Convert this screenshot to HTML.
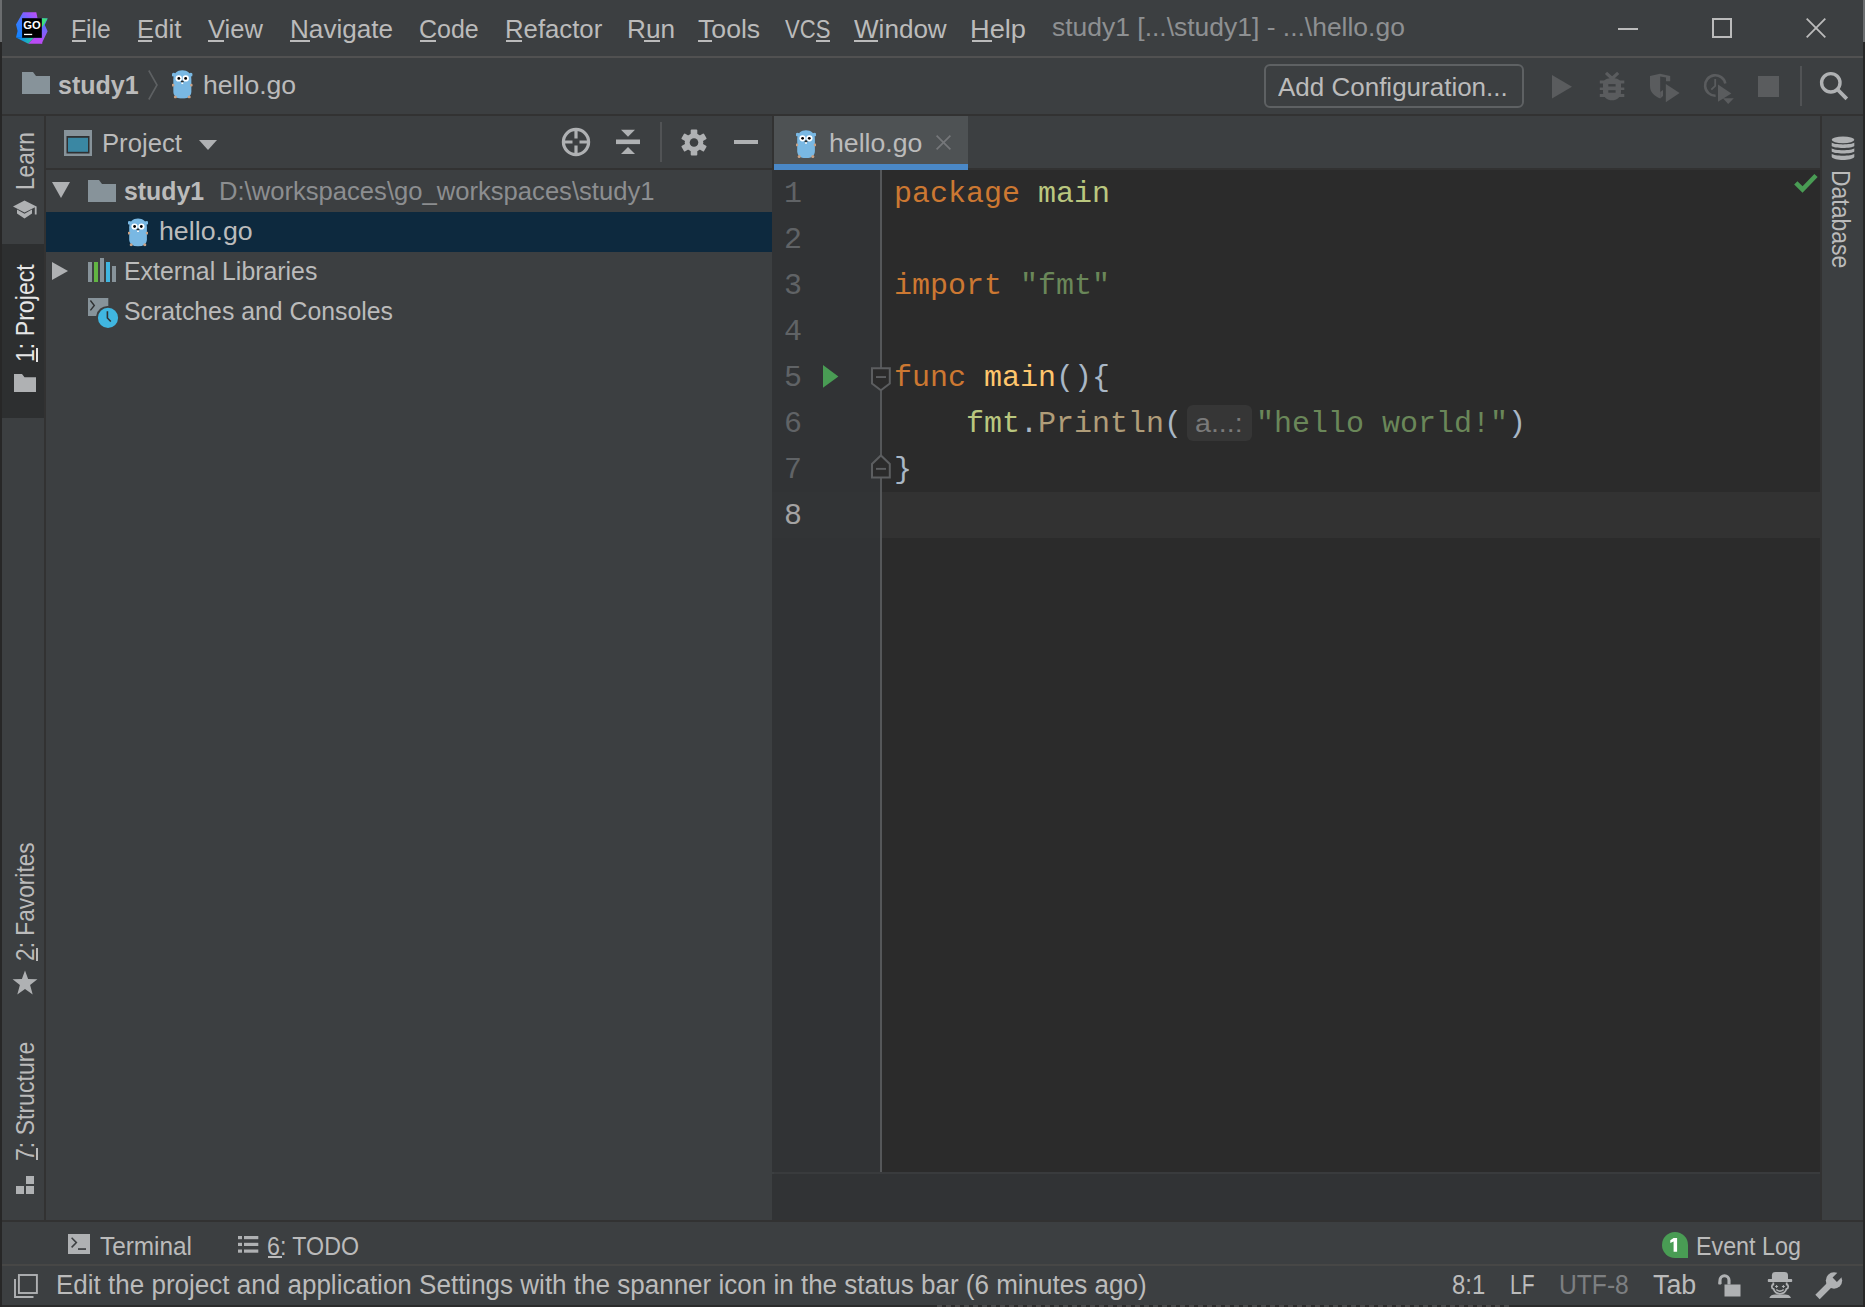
<!DOCTYPE html>
<html><head><meta charset="utf-8">
<style>
html,body{margin:0;padding:0;}
body{width:1865px;height:1307px;overflow:hidden;background:#3c3f41;position:relative;font-family:"Liberation Sans",sans-serif;}
.a{position:absolute;}
.t{position:absolute;white-space:pre;font-family:"Liberation Sans",sans-serif;color:#bbbbbb;transform-origin:0 0;}
.m{position:absolute;white-space:pre;font-family:"Liberation Mono",monospace;font-size:30px;line-height:30px;color:#a9b7c6;}
.ln{position:absolute;white-space:pre;font-family:"Liberation Mono",monospace;font-size:30px;line-height:30px;color:#606366;left:784px;}
.ul{position:absolute;height:2px;background:#bbbbbb;}
.kw{color:#cc7832}.pk{color:#bac77f}.fn{color:#ffc66d}.cl{color:#b09d79}.st{color:#6a8759}
svg{position:absolute;overflow:visible;}
</style></head><body>
<svg width="0" height="0" style="position:absolute">
<defs>
<symbol id="gopher" viewBox="0 0 20 28">
<path d="M1.2 9 C1.2 3 5 0.2 10 0.2 C15 0.2 18.9 3 18.9 9 L18.9 21 C18.9 25.5 15.5 28.2 10 28.2 C4.5 28.2 1.2 25.5 1.2 21 Z" fill="#79b8e3"/>
<circle cx="1.6" cy="4.6" r="1.9" fill="#79b8e3"/><circle cx="18.4" cy="4.6" r="1.9" fill="#79b8e3"/>
<circle cx="0.9" cy="14.9" r="1.4" fill="#c9a184"/><circle cx="19.1" cy="14.9" r="1.4" fill="#c9a184"/>
<circle cx="3.2" cy="26.6" r="1.5" fill="#c9a184"/><circle cx="16.8" cy="26.6" r="1.5" fill="#c9a184"/>
<circle cx="6.5" cy="8.3" r="3.1" fill="#fff"/><circle cx="13.4" cy="8.3" r="3.1" fill="#fff"/>
<circle cx="6.6" cy="8.3" r="1.4" fill="#000"/><circle cx="13.3" cy="8.3" r="1.4" fill="#000"/>
<ellipse cx="10" cy="11.4" rx="1.5" ry="1.1" fill="#2a2a2a"/><rect x="9.1" y="12.2" width="1.8" height="1.6" fill="#fff"/>
</symbol>
<linearGradient id="lg1" x1="0" y1="1" x2="1" y2="0"><stop offset="0" stop-color="#0b87ff"/><stop offset="0.55" stop-color="#5b6cff"/><stop offset="1" stop-color="#c24bf4"/></linearGradient>
<linearGradient id="lg2" x1="0" y1="0" x2="1" y2="1"><stop offset="0" stop-color="#1aa5c8"/><stop offset="0.4" stop-color="#3de07a"/><stop offset="0.5" stop-color="#c14bf5"/><stop offset="1" stop-color="#8a5cf8"/></linearGradient>
</defs>
</svg>

<!-- window edges -->
<div class="a" style="left:0;top:0;width:2px;height:42px;background:#6b6d6f"></div>
<div class="a" style="left:0;top:42px;width:2px;height:1265px;background:#272727"></div>
<div class="a" style="left:1863px;top:0;width:2px;height:42px;background:#6b6d6f"></div>
<div class="a" style="left:1863px;top:42px;width:2px;height:1265px;background:#272727"></div>

<!-- title bar separator -->
<div class="a" style="left:2px;top:56px;width:1861px;height:2px;background:#515151"></div>
<!-- breadcrumb bottom -->
<div class="a" style="left:2px;top:114px;width:1861px;height:2px;background:#323232"></div>

<!-- left tool strip divider -->
<div class="a" style="left:44px;top:116px;width:2px;height:1104px;background:#323232"></div>
<!-- selected tool button -->
<div class="a" style="left:2px;top:244px;width:42px;height:174px;background:#2d2f30"></div>

<!-- project panel header bottom -->
<div class="a" style="left:46px;top:168px;width:726px;height:2px;background:#323232"></div>
<!-- divider project/editor -->
<div class="a" style="left:772px;top:116px;width:2px;height:54px;background:#323232"></div>
<!-- tab bar bottom -->
<div class="a" style="left:774px;top:168px;width:1046px;height:2px;background:#323232"></div>
<!-- right strip divider -->
<div class="a" style="left:1820px;top:116px;width:2px;height:1104px;background:#323232"></div>

<!-- tab -->
<div class="a" style="left:774px;top:116px;width:194px;height:48px;background:#4e5254"></div>
<div class="a" style="left:774px;top:164px;width:194px;height:6px;background:#4a88c7"></div>

<!-- tree selection -->
<div class="a" style="left:46px;top:212px;width:726px;height:40px;background:#0d293e"></div>

<!-- gutter -->
<div class="a" style="left:772px;top:170px;width:108px;height:1002px;background:#313335"></div>
<div class="a" style="left:772px;top:492px;width:108px;height:46px;background:#323436"></div>
<div class="a" style="left:880px;top:170px;width:2px;height:1002px;background:#555759"></div>
<!-- editor -->
<div class="a" style="left:882px;top:170px;width:938px;height:1002px;background:#2b2b2b"></div>
<div class="a" style="left:882px;top:492px;width:938px;height:46px;background:#323232"></div>
<!-- below editor -->
<div class="a" style="left:774px;top:1172px;width:1046px;height:2px;background:#393b3d"></div>
<div class="a" style="left:772px;top:1174px;width:1048px;height:46px;background:#313335"></div>

<!-- bottom separators -->
<div class="a" style="left:2px;top:1220px;width:1861px;height:2px;background:#323232"></div>
<div class="a" style="left:2px;top:1264px;width:1861px;height:2px;background:#474746"></div>
<div class="a" style="left:2px;top:1305px;width:1861px;height:2px;background:#2b2b2b"></div>

<!-- GoLand logo -->
<svg style="left:16px;top:12px" width="32" height="32" viewBox="16 12 32 32">
<defs>
<linearGradient id="lgA" x1="16" y1="38" x2="37" y2="12" gradientUnits="userSpaceOnUse"><stop offset="0" stop-color="#0a84ff"/><stop offset="0.45" stop-color="#3a7bff"/><stop offset="0.75" stop-color="#8a5cff"/><stop offset="1" stop-color="#c74cf4"/></linearGradient>
<linearGradient id="lgB" x1="41" y1="20" x2="44" y2="42" gradientUnits="userSpaceOnUse"><stop offset="0" stop-color="#3a7bff"/><stop offset="1" stop-color="#b44cf6"/></linearGradient>
<linearGradient id="lgC" x1="18" y1="38" x2="36" y2="40" gradientUnits="userSpaceOnUse"><stop offset="0" stop-color="#0a84ff"/><stop offset="0.6" stop-color="#1fb2b8"/><stop offset="1" stop-color="#3ee07a"/></linearGradient>
</defs>
<polygon points="23,12.2 36.3,12.2 37.5,18.3 41.8,18.3 41.8,37.8 22.1,37.8 16,37.4 17.6,31 16,24.5" fill="url(#lgA)"/>
<polygon points="41.8,18.3 47.6,18.4 44.8,25 47.6,31.2 41.7,43.6 32,40 41.8,37.8" fill="url(#lgB)"/>
<polygon points="41.8,18.3 47.6,18.4 41.8,28" fill="#3ee07a"/>
<polygon points="16,37.4 22.1,37.8 34,37.8 28.4,43.8" fill="url(#lgC)"/>
<polygon points="28.4,43.8 34,37.8 41.8,37.8 42.3,43.8" fill="#b94cf5"/>
<rect x="22.1" y="18.2" width="19.7" height="19.6" fill="#000"/>
<text x="23.3" y="28.6" font-family="Liberation Sans" font-weight="bold" font-size="10.6" fill="#fff" textLength="17.5" lengthAdjust="spacingAndGlyphs">GO</text>
<rect x="24" y="33.8" width="8.2" height="1.3" fill="#fff"/>
</svg>

<!-- window controls -->
<div class="a" style="left:1618px;top:28px;width:20px;height:2px;background:#bbbbbb"></div>
<div class="a" style="left:1712px;top:18px;width:16px;height:16px;border:2px solid #bbbbbb"></div>
<svg style="left:1806px;top:18px" width="20" height="20"><path d="M0.7 0.7 L19.3 19.3 M19.3 0.7 L0.7 19.3" stroke="#bbbbbb" stroke-width="1.8"/></svg>

<!-- breadcrumb folder -->
<svg style="left:22px;top:72px" width="28" height="22"><path d="M0 0 H11 L14 4 H28 V22 H0 Z" fill="#87939a"/></svg>
<svg style="left:148px;top:70px" width="10" height="30"><path d="M0.8 0.5 L9 15 L0.8 29.5" stroke="#5e6163" stroke-width="1.6" fill="none"/></svg>
<svg style="left:172px;top:69.5px" width="20.6" height="28.5"><use href="#gopher" width="20.6" height="28.5"/></svg>

<!-- add configuration -->
<div class="a" style="left:1264px;top:64px;width:256px;height:40px;border:2px solid #5e6163;border-radius:6px"></div>

<!-- toolbar icons -->
<svg style="left:1552px;top:74.5px" width="20" height="24"><polygon points="0,0 20,11.7 0,23.5" fill="#5a5c5e"/></svg>
<svg style="left:1599px;top:71px" width="26" height="30" viewBox="1599 71 26 30">
<path d="M1606 72.8 L1612.1 78.5 L1618.2 72.8" stroke="#5a5c5e" stroke-width="3.2" fill="none"/>
<path d="M1603 84 C1603 80 1607 78 1612.1 78 C1617.2 78 1621 80 1621 84 V92 C1621 97 1617 100.3 1612 100.3 C1607 100.3 1603 97 1603 92 Z" fill="#5a5c5e"/>
<rect x="1599.8" y="80.5" width="24.5" height="3.2" fill="#5a5c5e"/>
<rect x="1599.8" y="87.3" width="24.5" height="2.8" fill="#5a5c5e"/>
<rect x="1599.8" y="93.8" width="24.5" height="3.2" fill="#5a5c5e"/>
<rect x="1599.8" y="83.7" width="3.2" height="3.6" fill="#3c3f41"/><rect x="1621.1" y="83.7" width="3.2" height="3.6" fill="#3c3f41"/>
<rect x="1599.8" y="90.1" width="3.2" height="3.7" fill="#3c3f41"/><rect x="1621.1" y="90.1" width="3.2" height="3.7" fill="#3c3f41"/>
<rect x="1608.3" y="84.1" width="7.3" height="2.4" fill="#3c3f41"/>
<rect x="1608.3" y="90.2" width="7.3" height="2.5" fill="#3c3f41"/>
</svg>
<svg style="left:1649px;top:73px" width="32" height="30" viewBox="1649 73 32 30">
<path d="M1650 76 L1660 73.7 L1670.2 76 V81.2 H1666 V77.6 L1660.2 76.5 V98.5 C1654 96 1650 92 1650 86 Z" fill="#5a5c5e"/>
<path d="M1663 90 V96 L1660.2 98.5 V92 Z" fill="#5a5c5e"/>
<polygon points="1665.8,84.1 1679.6,93.1 1665.8,102.2" fill="#5a5c5e"/>
</svg>
<svg style="left:1700px;top:72px" width="36" height="34" viewBox="1700 72 36 34">
<path d="M1725.3 83.5 A10.2 10.2 0 1 0 1715.6 95.7" stroke="#5a5c5e" stroke-width="2.6" fill="none"/>
<path d="M1715.2 79 V85.8 L1711.3 89.6" stroke="#5a5c5e" stroke-width="1.8" fill="none"/>
<polygon points="1718,84.5 1731.4,93.4 1718,101.8" fill="#5a5c5e"/>
<polygon points="1722.9,98.2 1733.8,98.2 1728.2,103.9" fill="#5a5c5e"/>
</svg>
<div class="a" style="left:1758px;top:76px;width:20.5px;height:20.5px;background:#5a5c5e"></div>
<div class="a" style="left:1800px;top:66px;width:2px;height:40px;background:#515355"></div>
<svg style="left:1819px;top:71px" width="30" height="30" viewBox="0 0 30 30"><circle cx="11.8" cy="11.8" r="9.2" stroke="#afb1b3" stroke-width="3.4" fill="none"/><path d="M18.5 18.5 L27.8 27.8" stroke="#afb1b3" stroke-width="3.8"/></svg>

<!-- left strip icons -->
<svg style="left:13px;top:200px" width="24" height="20" viewBox="0 0 24 20">
<polygon points="0,6.5 11.5,0.5 23.5,6.5 11.5,12.5" fill="#afb1b3"/>
<path d="M4 9.5 V13.5 L11.5 18.5 L19 13.5 V9.5 L11.5 13.8 Z" fill="#afb1b3"/>
<rect x="21.8" y="6.5" width="1.8" height="8" fill="#afb1b3"/>
</svg>
<svg style="left:14px;top:374px" width="22" height="18"><path d="M0 0 H8 L10.5 3.2 H22 V18 H0 Z" fill="#afb1b3"/></svg>
<svg style="left:12px;top:970px" width="26" height="25" viewBox="0 0 26 25"><polygon points="13,0.5 16.1,9 25.4,9.3 18.1,15 20.7,24.4 13,19 5.3,24.4 7.9,15 0.6,9.3 9.9,9" fill="#afb1b3"/></svg>
<svg style="left:16px;top:1176px" width="18" height="18"><rect x="10" y="0" width="8" height="8" fill="#afb1b3"/><rect x="0" y="10" width="8" height="8" fill="#afb1b3"/><rect x="10" y="10" width="8" height="8" fill="#afb1b3"/></svg>

<!-- project header -->
<svg style="left:64px;top:130px" width="28" height="26"><rect x="0" y="0" width="28" height="26" fill="#87939a"/><rect x="2.5" y="6" width="23" height="17.5" fill="#2f3133"/><rect x="4" y="7.8" width="20" height="14" fill="#3a87a3"/></svg>
<svg style="left:199px;top:140px" width="18" height="10"><polygon points="0,0 18,0 9,10" fill="#afb1b3"/></svg>
<svg style="left:561px;top:127px" width="30" height="30" viewBox="0 0 30 30"><circle cx="15" cy="15" r="12.6" stroke="#afb1b3" stroke-width="3.2" fill="none"/><path d="M15 2 V11.5 M15 18.5 V28 M2 15 H11.5 M18.5 15 H28" stroke="#afb1b3" stroke-width="3.2"/></svg>
<svg style="left:616px;top:129px" width="24" height="26" viewBox="0 0 24 26"><polygon points="5,0.8 19,0.8 12,7.8" fill="#afb1b3"/><rect x="0" y="10.5" width="24" height="4.6" fill="#afb1b3"/><polygon points="5,25 19,25 12,18" fill="#afb1b3"/></svg>
<div class="a" style="left:660px;top:122px;width:2px;height:40px;background:#515355"></div>
<svg style="left:681px;top:128.5px" width="26" height="27" viewBox="-13 -13.5 26 27">
<g fill="#afb1b3">
<rect x="-3.3" y="-13" width="6.6" height="26" rx="1"/>
<rect x="-3.3" y="-13" width="6.6" height="26" rx="1" transform="rotate(60)"/>
<rect x="-3.3" y="-13" width="6.6" height="26" rx="1" transform="rotate(120)"/>
<circle cx="0" cy="0" r="9.3"/>
</g>
<circle cx="0" cy="0" r="4.3" fill="#3c3f41"/>
</svg>
<div class="a" style="left:734px;top:139.5px;width:24px;height:4.6px;background:#afb1b3"></div>

<!-- tab gopher + close -->
<svg style="left:796px;top:130px" width="20" height="28"><use href="#gopher" width="20" height="28"/></svg>
<svg style="left:936px;top:135px" width="15" height="15"><path d="M0.6 0.6 L14.4 14.4 M14.4 0.6 L0.6 14.4" stroke="#75777a" stroke-width="1.7"/></svg>

<!-- right strip -->
<svg style="left:1794px;top:173px" width="24" height="20"><path d="M1.8 9.8 L8.5 16.5 L22 2.5" stroke="#499c54" stroke-width="4.6" fill="none"/></svg>
<svg style="left:1831px;top:136px" width="24" height="25" viewBox="0 0 24 25">
<g fill="#afb1b3">
<ellipse cx="12" cy="3.8" rx="11.3" ry="3.4"/>
<path d="M0.7 6.5 C3 9 21 9 23.3 6.5 V10 C21 12.6 3 12.6 0.7 10 Z"/>
<path d="M0.7 12.2 C3 14.8 21 14.8 23.3 12.2 V15.6 C21 18.2 3 18.2 0.7 15.6 Z"/>
<path d="M0.7 17.8 C3 20.4 21 20.4 23.3 17.8 V21 C21 25 3 25 0.7 21 Z"/>
</g>
</svg>

<!-- tree -->
<svg style="left:52px;top:182px" width="18" height="16"><polygon points="0,0 18,0 9,16" fill="#afb1b3"/></svg>
<svg style="left:88px;top:180px" width="28" height="22"><path d="M0 0 H11 L14 4 H28 V22 H0 Z" fill="#87939a"/></svg>
<svg style="left:128px;top:217.6px" width="20" height="28.4"><use href="#gopher" width="20" height="28.4"/></svg>
<svg style="left:52px;top:262px" width="16" height="18"><polygon points="0,0 16,9 0,18" fill="#afb1b3"/></svg>
<svg style="left:88px;top:258px" width="28" height="24">
<rect x="0" y="4" width="4" height="20" fill="#87939a"/><rect x="6" y="4" width="4" height="20" fill="#62b543"/>
<rect x="12" y="0" width="4" height="24" fill="#87939a"/><rect x="18" y="4" width="4" height="20" fill="#40b6e0"/>
<rect x="24" y="8" width="4" height="16" fill="#87939a"/>
</svg>
<svg style="left:88px;top:298px" width="32" height="32" viewBox="0 0 32 32">
<path d="M0 0 H20.3 V8 A11.5 11.5 0 0 0 8.2 18 H0 Z" fill="#87939a"/>
<path d="M2.4 2.5 L6.3 7.5 L2.4 12.4" stroke="#2f3133" stroke-width="1.4" fill="none"/>
<circle cx="20" cy="19.8" r="10.1" fill="#40b6e0"/>
<path d="M19.4 13.3 V20 L22.8 23.5" stroke="#2f3133" stroke-width="1.6" fill="none"/>
</svg>

<!-- gutter -->
<svg style="left:823px;top:364.5px" width="16" height="23"><polygon points="0,0 15.4,11.4 0,22.8" fill="#499c54"/></svg>
<svg style="left:870px;top:366px" width="22" height="26" viewBox="870 366 22 26"><path d="M872 368.2 H889.8 V383.5 L880.9 390.3 L872 383.5 Z" fill="#2b2b2b" stroke="#5c5e60" stroke-width="2"/><rect x="876" y="376.1" width="10" height="1.9" fill="#5c5e60"/></svg>
<svg style="left:870px;top:454px" width="22" height="26" viewBox="870 454 22 26"><path d="M872 477.6 H889.8 V464 L880.9 455.5 L872 464 Z" fill="#2b2b2b" stroke="#5c5e60" stroke-width="2"/><rect x="876" y="467.9" width="10" height="1.9" fill="#5c5e60"/></svg>

<!-- hint box -->
<div class="a" style="left:1186.5px;top:404.5px;width:65px;height:36.5px;background:#363636;border-radius:6px"></div>

<!-- bottom bar -->
<svg style="left:68px;top:1234px" width="22" height="20"><rect width="22" height="20" fill="#afb1b3"/><path d="M3.6 3.8 L8.4 8.6 L3.6 13.4" stroke="#3c3f41" stroke-width="1.5" fill="none"/><rect x="10" y="14.2" width="8" height="1.7" fill="#3c3f41"/></svg>
<svg style="left:237.7px;top:1236px" width="21" height="17" viewBox="0 0 21 17">
<g fill="#afb1b3"><rect x="0" y="0" width="4" height="3.2"/><rect x="6" y="0" width="14.3" height="3.2"/>
<rect x="0" y="6.8" width="4" height="3.2"/><rect x="6" y="6.8" width="14.3" height="3.2"/>
<rect x="0" y="13.5" width="4" height="3.2"/><rect x="6" y="13.5" width="14.3" height="3.2"/></g></svg>
<svg style="left:1662px;top:1232px" width="26" height="26" viewBox="0 0 26 26"><path d="M13 0 A13 13 0 0 1 26 13 V26 H13 A13 13 0 0 1 13 0 Z" fill="#499c54"/><path d="M11.6 6 H15.1 V19.8 H11.6 V9.6 L8.3 10.9 V8.2 Z" fill="#fff"/></svg>

<!-- status bar icons -->
<svg style="left:14px;top:1274px" width="24" height="24" viewBox="0 0 24 24"><rect x="4.9" y="1" width="18" height="18" stroke="#afb1b3" stroke-width="1.9" fill="none"/><path d="M1 5 V23 H19.5" stroke="#afb1b3" stroke-width="1.9" fill="none"/></svg>
<svg style="left:1717.5px;top:1274px" width="23" height="23" viewBox="0 0 23 23"><path d="M2 10 V6.2 A4.5 4.5 0 0 1 11 6.2 V10.5" stroke="#afb1b3" stroke-width="3.1" fill="none"/><rect x="6.5" y="10.5" width="16" height="12" fill="#afb1b3"/><rect x="0.5" y="7.5" width="2.6" height="3" fill="#afb1b3"/></svg>
<svg style="left:1767px;top:1271px" width="26" height="28" viewBox="0 0 26 28">
<g fill="#afb1b3"><path d="M4.9 9 V4.5 C4.9 2 6 1 8.5 1 H17.4 C19.9 1 21 2 21 4.5 V9 Z"/><rect x="0.8" y="8.1" width="24.4" height="3" rx="0.8"/>
<path d="M2.3 26.9 C3 24.6 5.5 23.5 8 23.5 H18.3 C20.8 23.5 23.3 24.6 24 26.9 Z"/></g>
<path d="M6.3 11.5 V13.5 C4.3 13.8 4.3 17.5 6.5 17.8 C7.5 21.2 10 22.8 13 22.8 C16 22.8 18.5 21.2 19.5 17.8 C21.7 17.5 21.7 13.8 19.7 13.5 V11.5" fill="none" stroke="#afb1b3" stroke-width="1.8"/>
<path d="M9.6 14 V17 M8.1 15.5 H11.1 M16.4 14 V17 M14.9 15.5 H17.9" stroke="#afb1b3" stroke-width="1"/>
<path d="M9.3 18.6 C11 20.6 15 20.6 16.7 18.6" stroke="#afb1b3" stroke-width="1.6" fill="none"/>
</svg>
<svg style="left:1814px;top:1272px" width="30" height="30" viewBox="0 0 30 30">
<path d="M3.5 25 L15.5 13" stroke="#afb1b3" stroke-width="6.2" stroke-linecap="butt"/>
<circle cx="20" cy="8.5" r="8.2" fill="#afb1b3"/>
<polygon points="22.9,9.9 18.6,5.6 26.6,-2.4 30.9,1.9" fill="#3c3f41"/>
</svg>

<div class="a" style="left:937px;top:1305px;width:573px;height:2px;background:repeating-linear-gradient(90deg,#4a4a4a 0px,#4a4a4a 5px,#2b2b2b 5px,#2b2b2b 9px)"></div>


<div class="t" style="left:71.04px;top:16.48px;font-size:26.6px;line-height:26.6px;font-weight:normal;color:#bbbbbb;transform:scaleX(0.9275)">File</div>
<div class="t" style="left:136.57px;top:16.48px;font-size:26.6px;line-height:26.6px;font-weight:normal;color:#bbbbbb;transform:scaleX(0.9659)">Edit</div>
<div class="t" style="left:208.0px;top:16.48px;font-size:26.6px;line-height:26.6px;font-weight:normal;color:#bbbbbb;transform:scaleX(0.9596)">View</div>
<div class="t" style="left:289.84px;top:16.48px;font-size:26.6px;line-height:26.6px;font-weight:normal;color:#bbbbbb;transform:scaleX(0.9824)">Navigate</div>
<div class="t" style="left:419.46px;top:16.48px;font-size:26.6px;line-height:26.6px;font-weight:normal;color:#bbbbbb;transform:scaleX(0.9403)">Code</div>
<div class="t" style="left:505.07px;top:16.48px;font-size:26.6px;line-height:26.6px;font-weight:normal;color:#bbbbbb;transform:scaleX(0.9673)">Refactor</div>
<div class="t" style="left:626.93px;top:16.48px;font-size:26.6px;line-height:26.6px;font-weight:normal;color:#bbbbbb;transform:scaleX(0.9844)">Run</div>
<div class="t" style="left:697.5px;top:16.48px;font-size:26.6px;line-height:26.6px;font-weight:normal;color:#bbbbbb;transform:scaleX(1.0017)">Tools</div>
<div class="t" style="left:784.6px;top:16.48px;font-size:26.6px;line-height:26.6px;font-weight:normal;color:#bbbbbb;transform:scaleX(0.8296)">VCS</div>
<div class="t" style="left:854.2px;top:16.48px;font-size:26.6px;line-height:26.6px;font-weight:normal;color:#bbbbbb;transform:scaleX(0.98)">Window</div>
<div class="t" style="left:969.95px;top:16.48px;font-size:26.6px;line-height:26.6px;font-weight:normal;color:#bbbbbb;transform:scaleX(1.0231)">Help</div>
<div class="t" style="left:1051.61px;top:14.48px;font-size:26.6px;line-height:26.6px;font-weight:normal;color:#8e9092;transform:scaleX(0.9946)">study1 [...\study1] - ...\hello.go</div>
<div class="t" style="left:57.96px;top:72.48px;font-size:26.6px;line-height:26.6px;font-weight:bold;color:#bbbbbb;transform:scaleX(0.9417)">study1</div>
<div class="t" style="left:203.0px;top:72.48px;font-size:26.6px;line-height:26.6px;font-weight:normal;color:#bbbbbb;transform:scaleX(1.0)">hello.go</div>
<div class="t" style="left:1278.3px;top:74.48px;font-size:26.6px;line-height:26.6px;font-weight:normal;color:#bbbbbb;transform:scaleX(0.9773)">Add Configuration...</div>
<div class="t" style="left:101.67px;top:130.48px;font-size:26.6px;line-height:26.6px;font-weight:normal;color:#bbbbbb;transform:scaleX(0.9654)">Project</div>
<div class="t" style="left:123.87px;top:178.48px;font-size:26.6px;line-height:26.6px;font-weight:bold;color:#bbbbbb;transform:scaleX(0.9345)">study1</div>
<div class="t" style="left:219.07px;top:178.48px;font-size:26.6px;line-height:26.6px;font-weight:normal;color:#8c8e90;transform:scaleX(0.9628)">D:\workspaces\go_workspaces\study1</div>
<div class="t" style="left:158.99px;top:218.48px;font-size:26.6px;line-height:26.6px;font-weight:normal;color:#bbbbbb;transform:scaleX(1.0056)">hello.go</div>
<div class="t" style="left:124.13px;top:258.48px;font-size:26.6px;line-height:26.6px;font-weight:normal;color:#bbbbbb;transform:scaleX(0.9343)">External Libraries</div>
<div class="t" style="left:124.27px;top:298.48px;font-size:26.6px;line-height:26.6px;font-weight:normal;color:#bbbbbb;transform:scaleX(0.9331)">Scratches and Consoles</div>
<div class="t" style="left:829.29px;top:130.48px;font-size:26.6px;line-height:26.6px;font-weight:normal;color:#bbbbbb;transform:scaleX(1.0033)">hello.go</div>
<div class="t" style="left:100.3px;top:1233.84px;font-size:25px;line-height:25px;font-weight:normal;color:#bbbbbb;transform:scaleX(0.9742)">Terminal</div>
<div class="t" style="left:267.37px;top:1233.84px;font-size:25px;line-height:25px;font-weight:normal;color:#bbbbbb;transform:scaleX(0.9278)">6: TODO</div>
<div class="t" style="left:1695.84px;top:1233.84px;font-size:25px;line-height:25px;font-weight:normal;color:#bbbbbb;transform:scaleX(0.9312)">Event Log</div>
<div class="t" style="left:55.97px;top:1272.14px;font-size:27px;line-height:27px;font-weight:normal;color:#bbbbbb;transform:scaleX(0.9637)">Edit the project and application Settings with the spanner icon in the status bar (6 minutes ago)</div>
<div class="t" style="left:1451.91px;top:1272.14px;font-size:27px;line-height:27px;font-weight:normal;color:#bbbbbb;transform:scaleX(0.8857)">8:1</div>
<div class="t" style="left:1509.84px;top:1272.14px;font-size:27px;line-height:27px;font-weight:normal;color:#bbbbbb;transform:scaleX(0.7793)">LF</div>
<div class="t" style="left:1559.18px;top:1272.14px;font-size:27px;line-height:27px;font-weight:normal;color:#7d7f81;transform:scaleX(0.9122)">UTF-8</div>
<div class="t" style="left:1653.01px;top:1272.14px;font-size:27px;line-height:27px;font-weight:normal;color:#bbbbbb;transform:scaleX(0.9929)">Tab</div>
<div class="t" style="left:1194.9px;top:409.99px;font-size:26px;line-height:26px;font-weight:normal;color:#7a7a7a;transform:scaleX(1.1)">a...:</div>
<div class="t" style="left:12.81px;top:190.38px;font-size:25.5px;line-height:25.5px;color:#bbbbbb;transform:rotate(-90deg) scaleX(0.8887)">Learn</div>
<div class="t" style="left:12.81px;top:361.82px;font-size:25.5px;line-height:25.5px;color:#e6e6e6;transform:rotate(-90deg) scaleX(0.9075)">1: Project</div>
<div class="t" style="left:12.91px;top:960.79px;font-size:25.5px;line-height:25.5px;color:#bbbbbb;transform:rotate(-90deg) scaleX(0.8909)">2: Favorites</div>
<div class="t" style="left:13.21px;top:1160.80px;font-size:25.5px;line-height:25.5px;color:#bbbbbb;transform:rotate(-90deg) scaleX(0.9046)">7: Structure</div>
<div class="t" style="left:1852.79px;top:169.70px;font-size:25.5px;line-height:25.5px;color:#bbbbbb;transform:rotate(90deg) scaleX(0.9)">Database</div>

<div class="ul" style="left:72.2px;top:40px;width:13.5px"></div>
<div class="ul" style="left:137.9px;top:40px;width:14px"></div>
<div class="ul" style="left:208px;top:40px;width:16px"></div>
<div class="ul" style="left:289.9px;top:40px;width:20px"></div>
<div class="ul" style="left:420px;top:40px;width:16px"></div>
<div class="ul" style="left:506px;top:40px;width:16px"></div>
<div class="ul" style="left:644.2px;top:40px;width:16px"></div>
<div class="ul" style="left:697.8px;top:40px;width:14px"></div>
<div class="ul" style="left:816.4px;top:40px;width:13.5px"></div>
<div class="ul" style="left:854.2px;top:40px;width:23.6px"></div>
<div class="ul" style="left:972.1px;top:40px;width:19.6px"></div>
<div class="ul" style="left:268px;top:1256px;width:14px"></div>
<div class="ul" style="left:36px;top:347.5px;width:2px;height:14px;background:#e6e6e6"></div>
<div class="ul" style="left:36px;top:948px;width:2px;height:13px"></div>
<div class="ul" style="left:36px;top:1148px;width:2px;height:12px"></div>


<div class="ln" style="top:179px">1</div>
<div class="ln" style="top:225px">2</div>
<div class="ln" style="top:271px">3</div>
<div class="ln" style="top:317px">4</div>
<div class="ln" style="top:363px">5</div>
<div class="ln" style="top:409px">6</div>
<div class="ln" style="top:455px">7</div>
<div class="ln" style="top:501px;color:#a4a3a3">8</div>
<div class="m" style="left:894px;top:179px"><span class="kw">package</span> <span class="pk">main</span></div>
<div class="m" style="left:894px;top:271px"><span class="kw">import</span> <span class="st">"fmt"</span></div>
<div class="m" style="left:894px;top:363px"><span class="kw">func</span> <span class="fn">main</span>(){</div>
<div class="m" style="left:894px;top:409px">    <span class="pk">fmt</span>.<span class="cl">Println</span>(</div>
<div class="m" style="left:1256px;top:409px"><span class="st">"hello world!"</span>)</div>
<div class="m" style="left:894px;top:455px">}</div>


<!--ROT-->

</body></html>
